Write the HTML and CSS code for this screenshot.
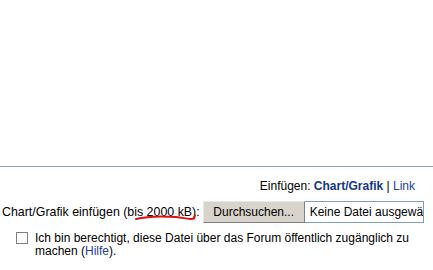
FILE: index.html
```html
<!DOCTYPE html>
<html>
<head>
<meta charset="utf-8">
<link rel="stylesheet" href="styles.css">
</head>
<body>
<div class="page">
  <div class="top"></div>
  <hr class="rule">
  <div class="insert">Einfügen: <a class="active" href="#">Chart/Grafik</a> | <a href="#">Link</a></div>
  <div class="upload">
    <span class="label">Chart/Grafik einfügen (bi<span class="mark">s 2000 kB<svg class="scribble" width="66" height="10" viewBox="0 0 66 10"><path d="M2 6 C 14 3, 28 3, 42 4 C 50 4.5, 54 7, 60 5.5 L 61 2.5" fill="none" stroke="#e01010" stroke-width="2" stroke-linecap="round"/></svg></span>):</span>
    <span class="file"><span class="btn">Durchsuchen...</span><span class="fname">Keine Datei ausgewählt</span></span>
  </div>
  <label class="check">
    <span class="box"></span>
    <span class="ctext">Ich bin berechtigt, diese Datei über das Forum öffentlich zugänglich zu machen (<a href="#">Hilfe</a>).</span>
  </label>
</div>
</body>
</html>
```
FILE: styles.css
```css
html, body { margin: 0; padding: 0; background: #fff; }
body { font-family: "Liberation Sans", Arial, sans-serif; font-size: 12px; color: #000; }
.page { width: 433px; height: 270px; overflow: hidden; position: relative; }
.top { height: 166px; }
.rule { margin: 0; border: 0; height: 1px; background: #8aa0b6; }
.insert { text-align: right; padding: 12px 18px 0 0; line-height: 15px; }
.insert a { color: #2440a0; text-decoration: none; }
.insert a.active { color: #14358a; font-weight: bold; }
.upload { display: flex; align-items: center; margin-top: 7px; padding-left: 2px; white-space: nowrap; }
.label { flex: none; margin-right: 3px; font-size: 12.4px; }
.mark { position: relative; }
.scribble { position: absolute; left: -3px; top: 8px; }
.file { display: flex; flex: none; height: 22px; }
.btn { box-sizing: border-box; width: 102px; height: 22px; background: #d8d4cc; border: 1px solid #808080; border-top-color: #e8e8e8; border-left-color: #e8e8e8; display: flex; align-items: center; justify-content: center; }
.fname { box-sizing: border-box; width: 119px; height: 22px; border: 1px solid #7f9db9; border-left: 0; padding-left: 5px; line-height: 20px; white-space: nowrap; overflow: hidden; }
.check { display: flex; align-items: flex-start; padding-left: 16px; margin-top: 8px; }
.box { flex: none; box-sizing: border-box; width: 12px; height: 12px; border: 1px solid #808080; background: #fff; margin-top: 1px; margin-right: 7px; }
.ctext { width: 400px; line-height: 13px; padding-top: 1px; }
.ctext a { color: #2440a0; text-decoration: none; }
```
